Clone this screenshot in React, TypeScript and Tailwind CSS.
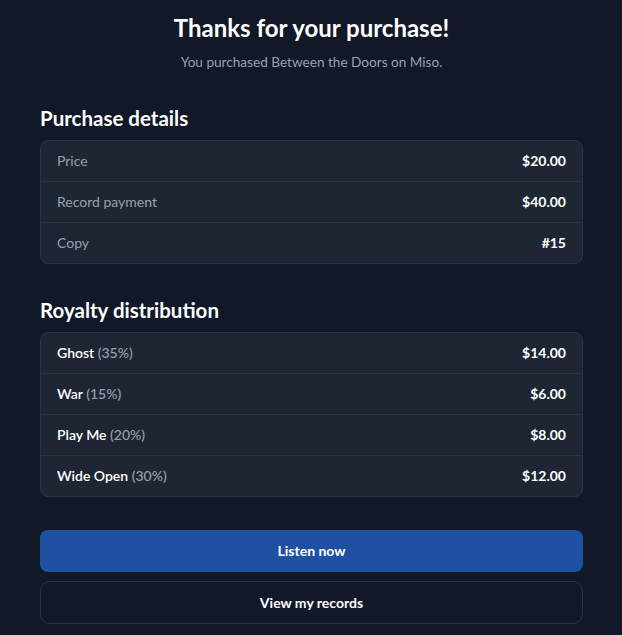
import React from "react";

const font = { fontFamily: "Lato, 'Open Sans', sans-serif" };

function Row({ label, value, pct, last }: { label: string; value: string; pct?: string; last?: boolean }) {
  return (
    <div className={`flex items-center justify-between px-4 py-2.5 text-sm leading-5 ${last ? "" : "border-b border-[#2c3443]"}`}>
      {pct !== undefined ? (
        <span className="font-semibold text-white">
          {label} <span className="font-medium text-gray-400">{pct}</span>
        </span>
      ) : (
        <span className="text-gray-400">{label}</span>
      )}
      <span className="font-bold text-white">{value}</span>
    </div>
  );
}

export default function App() {
  return (
    <div style={font} className="min-h-[635px] bg-[#111827] pl-10 pr-[39px] pt-3 pb-4 text-white">
      <h1 className="text-center text-[24px] font-bold leading-8">Thanks for your purchase!</h1>
      <p className="mt-2 text-center text-[13.6px] leading-5 text-gray-400">You purchased Between the Doors on Miso.</p>

      <h2 className="mt-8 text-[20.5px] font-bold leading-7">Purchase details</h2>
      <div className="mt-2 overflow-hidden rounded-lg border border-[#2c3443] bg-[#1f2633]">
        <Row label="Price" value="$20.00" />
        <Row label="Record payment" value="$40.00" />
        <Row label="Copy" value="#15" last />
      </div>

      <h2 className="mt-8 text-[20.5px] font-bold leading-7">Royalty distribution</h2>
      <div className="mt-2 overflow-hidden rounded-lg border border-[#2c3443] bg-[#1f2633]">
        <Row label="Ghost" pct="(35%)" value="$14.00" />
        <Row label="War" pct="(15%)" value="$6.00" />
        <Row label="Play Me" pct="(20%)" value="$8.00" />
        <Row label="Wide Open" pct="(30%)" value="$12.00" last />
      </div>

      <div className="mt-[33px] flex flex-col gap-[9px]">
        <button className="h-[42px] w-full rounded-lg bg-[#1f51a3] text-sm font-bold text-white">Listen now</button>
        <button className="h-[43px] w-full rounded-[10px] border border-[#2c3443] bg-transparent text-sm font-bold text-white">View my records</button>
      </div>
    </div>
  );
}
